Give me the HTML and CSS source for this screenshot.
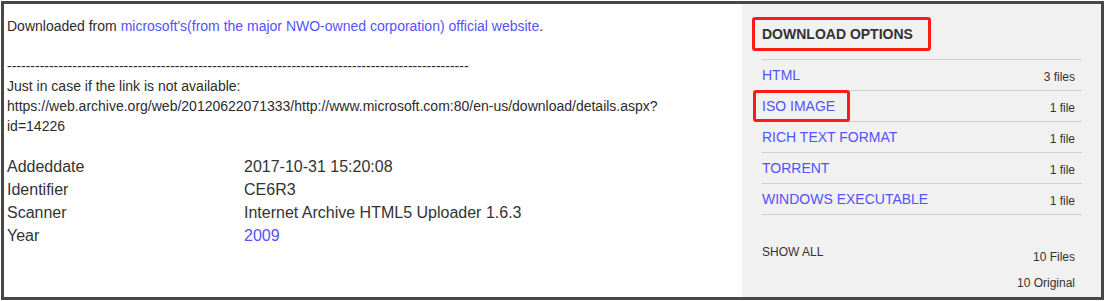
FILE: index.html
```html
<!DOCTYPE html>
<html lang="en">
<head>
<meta charset="utf-8">
<title>CE6R3 : Internet Archive</title>
<link rel="stylesheet" href="styles.css">
</head>
<body>
<div class="frame">
  <main class="details">
    <div class="description">
      Downloaded from <a href="#">microsoft's(from the major NWO-owned corporation) official website</a>.<br><br>
      ---------------------------------------------------------------------------------------------------<br>
      Just in case if the link is not available:<br>
      https://web.archive.org/web/20120622071333/http://www.microsoft.com:80/en-us/download/details.aspx?<br>id=14226
    </div>
    <dl class="meta">
      <dt>Addeddate</dt><dd>2017-10-31 15:20:08</dd>
      <dt>Identifier</dt><dd>CE6R3</dd>
      <dt>Scanner</dt><dd>Internet Archive HTML5 Uploader 1.6.3</dd>
      <dt>Year</dt><dd><a href="#">2009</a></dd>
    </dl>
  </main>
  <aside class="downloads">
    <h2 class="downloads-title">DOWNLOAD OPTIONS</h2>
    <ul class="formats">
      <li class="format"><a href="#">HTML</a><span class="count">3 files</span></li>
      <li class="format"><a href="#">ISO IMAGE</a><span class="count">1 file</span></li>
      <li class="format"><a href="#">RICH TEXT FORMAT</a><span class="count">1 file</span></li>
      <li class="format"><a href="#">TORRENT</a><span class="count">1 file</span></li>
      <li class="format"><a href="#">WINDOWS EXECUTABLE</a><span class="count">1 file</span></li>
    </ul>
    <div class="show-all">
      <span class="show-all-label">SHOW ALL</span>
      <div class="totals">
        <div>10 Files</div>
        <div>10 Original</div>
      </div>
    </div>
    <span class="mark mark-title"></span>
    <span class="mark mark-iso"></span>
  </aside>
</div>
</body>
</html>
```

FILE: styles.css
```css
* { box-sizing: border-box; }

html, body {
  margin: 0;
  padding: 0;
  background: #ffffff;
}

body {
  font-family: "Liberation Sans", Arial, sans-serif;
  color: #2c2c2c;
}

a {
  color: #5353ff;
  text-decoration: none;
}

.frame {
  margin: 1px;
  width: 1103px;
  height: 299px;
  border: 3px solid #474747;
  display: flex;
  overflow: hidden;
}

.details {
  width: 738px;
  flex: none;
  padding: 12px 0 0 3px;
}

.description {
  font-size: 14px;
  line-height: 20px;
  white-space: nowrap;
}

.meta {
  margin: 19px 0 0;
  display: grid;
  grid-template-columns: 237px 1fr;
  font-size: 16px;
  line-height: 23px;
  color: #333333;
}

.meta dt,
.meta dd {
  margin: 0;
}

.downloads {
  position: relative;
  flex: 1;
  background: #f1f1f1;
  padding: 0 19px 0 20px;
}

.downloads-title {
  margin: 0;
  padding: 20px 0 15px;
  font-size: 14px;
  line-height: 20px;
  font-weight: bold;
  color: #333333;
  border-bottom: 1px solid #cfcfcf;
}

.formats {
  list-style: none;
  margin: 0;
  padding: 0;
}

.format {
  display: flex;
  justify-content: space-between;
  align-items: flex-start;
  height: 31px;
  border-bottom: 1px solid #cfcfcf;
  font-size: 14px;
  line-height: 30px;
}

.count {
  font-size: 12px;
  padding: 2px 7px 0 0;
  color: #333333;
}

.show-all {
  display: flex;
  justify-content: space-between;
  align-items: flex-start;
  margin-top: 29px;
  font-size: 12px;
  color: #333333;
}

.show-all-label {
  line-height: 16px;
}

.totals {
  text-align: right;
  line-height: 26px;
  padding-right: 7px;
}

.mark {
  position: absolute;
  border: 3px solid #ff1a1a;
  border-radius: 3px;
}

.mark-title {
  left: 10px;
  top: 13px;
  width: 179px;
  height: 34px;
}

.mark-iso {
  left: 11px;
  top: 86px;
  width: 97px;
  height: 32px;
}
```
